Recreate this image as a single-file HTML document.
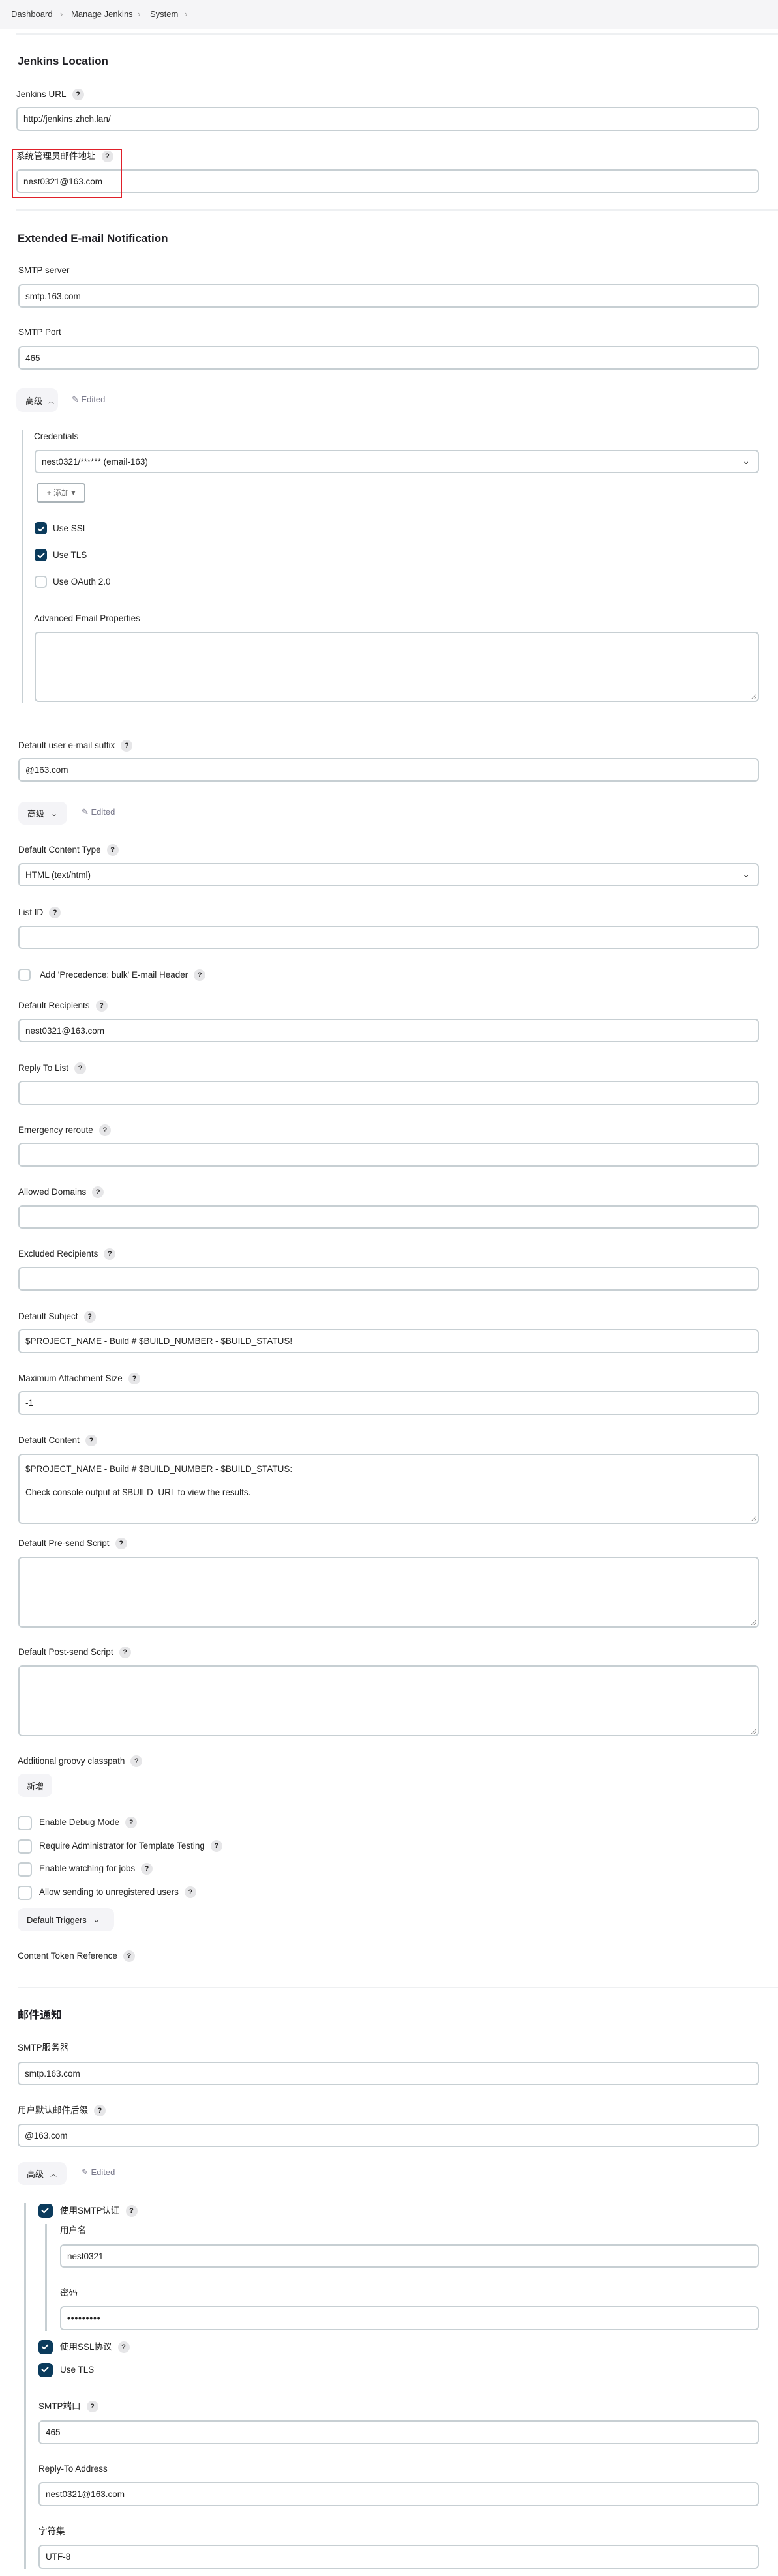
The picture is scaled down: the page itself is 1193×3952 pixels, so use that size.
<!DOCTYPE html>
<html><head><meta charset="utf-8">
<style>
*{box-sizing:border-box;margin:0;padding:0}
body{width:1193px;height:3952px;position:relative;background:#fff;font-family:"Liberation Sans","Noto Sans CJK SC",sans-serif;color:#1f1f24;overflow:hidden}
.a{position:absolute}
.bc{left:0;top:0;width:1193px;height:45px;background:#f5f5f7;font-size:13px;color:#333}
.bc span{position:absolute;top:14px}
.sep{height:2px;background:#eef0f2;left:24px;width:1169px}
.h{font-weight:bold;font-size:17px;left:27px;line-height:22px}
.l{font-size:13.5px;line-height:18px;color:#222;white-space:nowrap}
.q{display:inline-block;width:18px;height:18px;border-radius:50%;background:#e6e6e8;font-size:11px;font-weight:bold;text-align:center;line-height:18px;margin-left:9px;vertical-align:middle;color:#222}
.i{border:2px solid #c7cfd3;border-radius:6px;font-size:13.5px;padding-left:9px;display:flex;align-items:center;color:#222}
.ta{border:2px solid #c7cfd3;border-radius:6px;font-size:13.5px;padding:8px 9px;color:#222;line-height:26px}
.ta:after{content:"";position:absolute;right:2px;bottom:2px;width:8px;height:8px;background:linear-gradient(135deg,transparent 45%,#999 45%,#999 55%,transparent 55%,transparent 70%,#999 70%,#999 80%,transparent 80%)}
.btn{background:#f4f4f7;border-radius:10px;font-size:13px;display:flex;align-items:center;padding-left:14px;color:#222}
.cb{width:19px;height:19px;border:2px solid #c7cfd3;border-radius:5px;background:#fff}
.cbc{background:#0b3b5c;border-color:#0b3b5c}
.cbc:after{content:"";position:absolute;left:5px;top:2px;width:4px;height:8px;border:solid #fff;border-width:0 2px 2px 0;transform:rotate(45deg)}
.vl{width:3px;background:#c7cfd3}
.ed{font-size:13px;color:#7a7a8c}
</style></head><body>
<div class="a bc"><span style="left:17px">Dashboard</span><span style="left:92px;color:#999">›</span><span style="left:109px">Manage Jenkins</span><span style="left:211px;color:#999">›</span><span style="left:230px">System</span><span style="left:283px;color:#999">›</span></div>
<div class="a sep" style="top:51px"></div>
<div class="a h" style="top:83px">Jenkins Location</div>
<div class="a l" style="left:25px;top:136px">Jenkins URL<span class="q">?</span></div>
<div class="a i" style="left:25px;top:164px;width:1139px;height:37px">http://jenkins.zhch.lan/</div>
<div class="a l" style="left:25px;top:231px">系统管理员邮件地址<span class="q">?</span></div>
<div class="a i" style="left:25px;top:260px;width:1139px;height:36px">nest0321@163.com</div>
<div class="a" style="left:19px;top:229px;width:168px;height:74px;border:1px solid #e0202a"></div>
<div class="a sep" style="top:321px"></div>
<div class="a h" style="top:355px">Extended E-mail Notification</div>
<div class="a l" style="left:28px;top:406px">SMTP server</div>
<div class="a i" style="left:28px;top:436px;width:1136px;height:36px">smtp.163.com</div>
<div class="a l" style="left:28px;top:501px">SMTP Port</div>
<div class="a i" style="left:28px;top:531px;width:1136px;height:36px">465</div>
<div class="a btn" style="left:25px;top:596px;width:64px;height:36px">高级 <span style="margin-left:8px;font-size:10px">︿</span></div>
<div class="a ed" style="left:110px;top:605px">✎ Edited</div>
<div class="a vl" style="left:33px;top:660px;height:418px"></div>
<div class="a l" style="left:52px;top:661px">Credentials</div>
<div class="a i" style="left:53px;top:690px;width:1111px;height:36px">nest0321/****** (email-163)<span style="position:absolute;right:12px;top:7px;font-size:14px">⌄</span></div>
<div class="a" style="left:56px;top:741px;width:75px;height:30px;border:2px solid #aab3b8;border-radius:4px;font-size:12px;color:#666;text-align:center;line-height:26px">+ 添加 ▾</div>
<div class="a cb cbc" style="left:53px;top:801px"></div><div class="a l" style="left:81px;top:802px">Use SSL</div>
<div class="a cb cbc" style="left:53px;top:842px"></div><div class="a l" style="left:81px;top:843px">Use TLS</div>
<div class="a cb" style="left:53px;top:883px"></div><div class="a l" style="left:81px;top:884px">Use OAuth 2.0</div>
<div class="a l" style="left:52px;top:940px">Advanced Email Properties</div>
<div class="a ta" style="left:53px;top:969px;width:1111px;height:108px"></div>

<div class="a l" style="left:28px;top:1135px">Default user e-mail suffix<span class="q">?</span></div>
<div class="a i" style="left:28px;top:1163px;width:1136px;height:36px">@163.com</div>
<div class="a btn" style="left:28px;top:1230px;width:75px;height:35px">高级 <span style="margin-left:10px;font-size:12px">⌄</span></div>
<div class="a ed" style="left:125px;top:1238px">✎ Edited</div>
<div class="a l" style="left:28px;top:1295px">Default Content Type<span class="q">?</span></div>
<div class="a i" style="left:28px;top:1324px;width:1136px;height:36px">HTML (text/html)<span style="position:absolute;right:12px;top:7px;font-size:14px">⌄</span></div>
<div class="a l" style="left:28px;top:1391px">List ID<span class="q">?</span></div>
<div class="a i" style="left:28px;top:1420px;width:1136px;height:36px"></div>
<div class="a cb" style="left:28px;top:1486px"></div><div class="a l" style="left:61px;top:1487px">Add 'Precedence: bulk' E-mail Header<span class="q">?</span></div>
<div class="a l" style="left:28px;top:1534px">Default Recipients<span class="q">?</span></div>
<div class="a i" style="left:28px;top:1563px;width:1136px;height:36px">nest0321@163.com</div>
<div class="a l" style="left:28px;top:1630px">Reply To List<span class="q">?</span></div>
<div class="a i" style="left:28px;top:1658px;width:1136px;height:37px"></div>
<div class="a l" style="left:28px;top:1725px">Emergency reroute<span class="q">?</span></div>
<div class="a i" style="left:28px;top:1753px;width:1136px;height:37px"></div>
<div class="a l" style="left:28px;top:1820px">Allowed Domains<span class="q">?</span></div>
<div class="a i" style="left:28px;top:1849px;width:1136px;height:36px"></div>
<div class="a l" style="left:28px;top:1915px">Excluded Recipients<span class="q">?</span></div>
<div class="a i" style="left:28px;top:1944px;width:1136px;height:36px"></div>
<div class="a l" style="left:28px;top:2011px">Default Subject<span class="q">?</span></div>
<div class="a i" style="left:28px;top:2039px;width:1136px;height:37px">$PROJECT_NAME - Build # $BUILD_NUMBER - $BUILD_STATUS!</div>
<div class="a l" style="left:28px;top:2106px">Maximum Attachment Size<span class="q">?</span></div>
<div class="a i" style="left:28px;top:2134px;width:1136px;height:37px">-1</div>
<div class="a l" style="left:28px;top:2201px">Default Content<span class="q">?</span></div>
<div class="a ta" style="left:28px;top:2230px;width:1136px;height:108px;padding-top:4px;line-height:36px">$PROJECT_NAME - Build # $BUILD_NUMBER - $BUILD_STATUS:<br>Check console output at $BUILD_URL to view the results.</div>
<div class="a l" style="left:28px;top:2359px">Default Pre-send Script<span class="q">?</span></div>
<div class="a ta" style="left:28px;top:2388px;width:1136px;height:109px"></div>
<div class="a l" style="left:28px;top:2526px">Default Post-send Script<span class="q">?</span></div>
<div class="a ta" style="left:28px;top:2555px;width:1136px;height:109px"></div>
<div class="a l" style="left:27px;top:2693px">Additional groovy classpath<span class="q">?</span></div>
<div class="a btn" style="left:27px;top:2721px;width:53px;height:36px">新增</div>
<div class="a cb" style="left:27px;top:2786px;width:22px;height:22px"></div><div class="a l" style="left:60px;top:2787px">Enable Debug Mode<span class="q">?</span></div>
<div class="a cb" style="left:27px;top:2822px;width:22px;height:22px"></div><div class="a l" style="left:60px;top:2823px">Require Administrator for Template Testing<span class="q">?</span></div>
<div class="a cb" style="left:27px;top:2857px;width:22px;height:22px"></div><div class="a l" style="left:60px;top:2858px">Enable watching for jobs<span class="q">?</span></div>
<div class="a cb" style="left:27px;top:2893px;width:22px;height:22px"></div><div class="a l" style="left:60px;top:2894px">Allow sending to unregistered users<span class="q">?</span></div>
<div class="a btn" style="left:27px;top:2927px;width:148px;height:36px">Default Triggers <span style="margin-left:10px;font-size:12px">⌄</span></div>
<div class="a l" style="left:27px;top:2992px">Content Token Reference<span class="q">?</span></div>
<div class="a sep" style="top:3048px;left:27px"></div>
<div class="a h" style="top:3081px">邮件通知</div>
<div class="a l" style="left:27px;top:3133px">SMTP服务器</div>
<div class="a i" style="left:27px;top:3163px;width:1137px;height:36px">smtp.163.com</div>
<div class="a l" style="left:27px;top:3229px">用户默认邮件后缀<span class="q">?</span></div>
<div class="a i" style="left:27px;top:3258px;width:1137px;height:36px">@163.com</div>
<div class="a btn" style="left:27px;top:3317px;width:75px;height:35px">高级 <span style="margin-left:10px;font-size:10px">︿</span></div>
<div class="a ed" style="left:125px;top:3325px">✎ Edited</div>
<div class="a vl" style="left:37px;top:3380px;height:562px"></div>
<div class="a cb cbc" style="left:59px;top:3381px;width:22px;height:22px;border-radius:6px"></div><div class="a l" style="left:92px;top:3383px">使用SMTP认证<span class="q">?</span></div>
<div class="a vl" style="left:69px;top:3412px;height:164px"></div>
<div class="a l" style="left:92px;top:3413px">用户名</div>
<div class="a i" style="left:92px;top:3443px;width:1072px;height:36px">nest0321</div>
<div class="a l" style="left:92px;top:3509px">密码</div>
<div class="a i" style="left:92px;top:3538px;width:1072px;height:37px;letter-spacing:1px;font-weight:bold">•••••••••</div>
<div class="a cb cbc" style="left:59px;top:3590px;width:22px;height:22px;border-radius:6px"></div><div class="a l" style="left:92px;top:3592px">使用SSL协议<span class="q">?</span></div>
<div class="a cb cbc" style="left:59px;top:3625px;width:22px;height:22px;border-radius:6px"></div><div class="a l" style="left:92px;top:3627px">Use TLS</div>
<div class="a l" style="left:59px;top:3683px">SMTP端口<span class="q">?</span></div>
<div class="a i" style="left:59px;top:3713px;width:1105px;height:37px">465</div>
<div class="a l" style="left:59px;top:3779px">Reply-To Address</div>
<div class="a i" style="left:59px;top:3808px;width:1105px;height:37px">nest0321@163.com</div>
<div class="a l" style="left:59px;top:3875px">字符集</div>
<div class="a i" style="left:59px;top:3904px;width:1105px;height:37px">UTF-8</div>
</body></html>
